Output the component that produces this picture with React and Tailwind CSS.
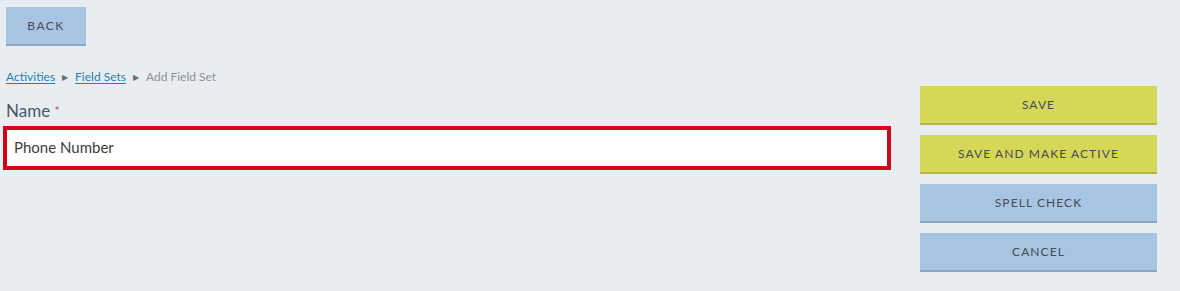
import React from 'react';

const font = { fontFamily: '"Lato", "Noto Sans", sans-serif' };

const ActionButton = ({ label, tone }) => {
  const toneClass =
    tone === 'yellow'
      ? 'bg-[#d5d757] border-[#b3b544]'
      : 'bg-[#a7c5e2] border-[#8aa7c6]';
  return (
    <button
      className={`h-[39px] w-full border-b-2 text-[12px] tracking-[0.09em] text-[#4b4a55] uppercase ${toneClass}`}
    >
      {label}
    </button>
  );
};

const Breadcrumb = () => (
  <div className="flex items-center gap-[7px] text-[12px] leading-4 ml-[3px]">
    <a className="text-[#2a7db5] underline underline-offset-2">Activities</a>
    <span className="text-[8px] text-[#6b6f75]">▶</span>
    <a className="text-[#2a7db5] underline underline-offset-2">Field Sets</a>
    <span className="text-[8px] text-[#6b6f75]">▶</span>
    <span className="text-[#8d9298]">Add Field Set</span>
  </div>
);

export default function App() {
  return (
    <div className="w-[1180px] h-[291px] bg-[#e8edf2] overflow-hidden" style={font}>
      <div className="pt-[7px] pl-[6px]">
        <button className="h-[39px] w-[80px] bg-[#a7c5e2] border-b-2 border-[#8aa7c6] text-[12px] tracking-[0.12em] text-[#4b4a55]">
          BACK
        </button>
      </div>

      <div className="flex pl-[3px] pr-[23px] mt-[23px]">
        {/* Form column */}
        <div className="flex-1">
          <Breadcrumb />
          <label className="block ml-[3px] mt-[16px] text-[17px] leading-5 text-[#4a5866]">
            Name <span className="text-[#b0455a] text-[12px] align-top">*</span>
          </label>
          <div className="mt-[5px] h-[44px] bg-white border-4 border-[#d0021b] flex items-center px-[7px] pb-[2px]">
            <span className="text-[15px] text-[#3d3d3d]">Phone Number</span>
          </div>
        </div>

        {/* Actions column */}
        <div className="w-[237px] ml-[29px] mt-[17px] flex flex-col gap-[10px]">
          <ActionButton label="Save" tone="yellow" />
          <ActionButton label="Save and make active" tone="yellow" />
          <ActionButton label="Spell check" tone="blue" />
          <ActionButton label="Cancel" tone="blue" />
        </div>
      </div>
    </div>
  );
}
